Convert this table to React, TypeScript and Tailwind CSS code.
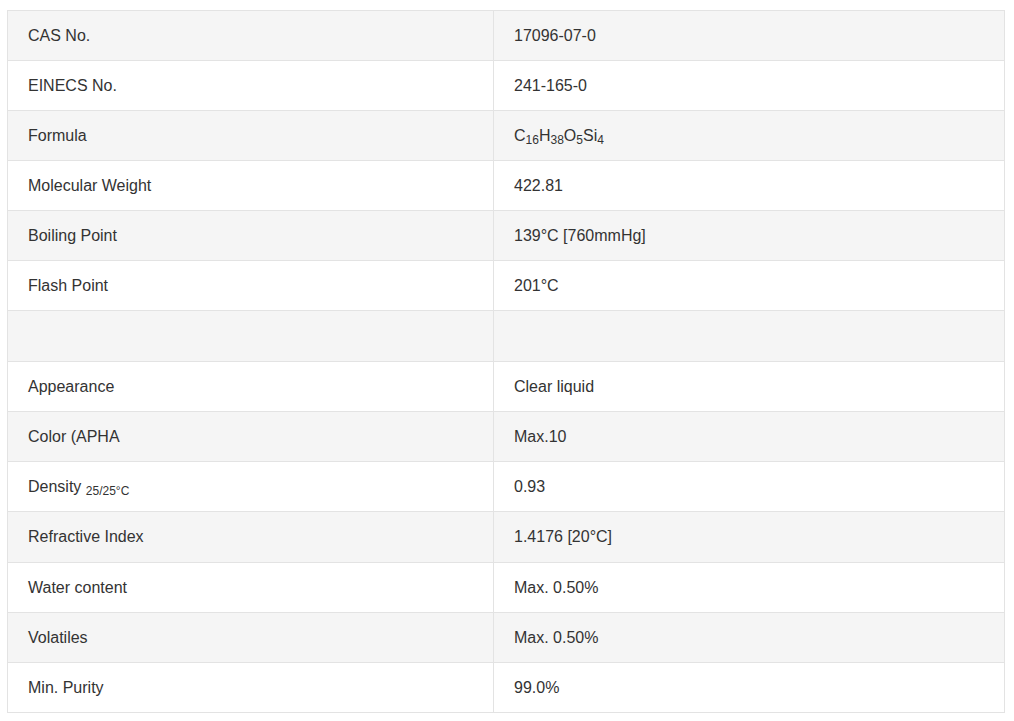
const rows: [React.ReactNode, React.ReactNode][] = [
  ["CAS No.", "17096-07-0"],
  ["EINECS No.", "241-165-0"],
  [
    "Formula",
    <>
      C<sub>16</sub>H<sub>38</sub>O<sub>5</sub>Si<sub>4</sub>
    </>,
  ],
  ["Molecular Weight", "422.81"],
  ["Boiling Point", "139°C [760mmHg]"],
  ["Flash Point", "201°C"],
  ["", ""],
  ["Appearance", "Clear liquid"],
  ["Color (APHA", "Max.10"],
  [
    <>
      Density <sub>25/25°C</sub>
    </>,
    "0.93",
  ],
  ["Refractive Index", "1.4176 [20°C]"],
  ["Water content", "Max. 0.50%"],
  ["Volatiles", "Max. 0.50%"],
  ["Min. Purity", "99.0%"],
];

export default function App() {
  return (
    <div className="bg-white min-h-[721px] pt-[10px] pl-[7px] font-['Liberation_Sans',Arial,sans-serif] text-[16px] text-[#333]">
      <table className="w-[998px] border-collapse border border-[#e3e3e3]">
        <tbody>
          {rows.map(([k, v], i) => {
            const h = i === 6 || i === 10 ? "h-[51px]" : "h-[50px]";
            return (
              <tr key={i} className={i % 2 === 0 ? "bg-[#f5f5f5]" : "bg-white"}>
                <td className={`w-[486px] ${h} border border-[#e3e3e3] px-5 py-0 align-middle leading-[20px]`}>
                  {k}
                </td>
                <td className={`${h} border border-[#e3e3e3] px-5 py-0 align-middle leading-[20px]`}>
                  {v}
                </td>
              </tr>
            );
          })}
        </tbody>
      </table>
    </div>
  );
}
